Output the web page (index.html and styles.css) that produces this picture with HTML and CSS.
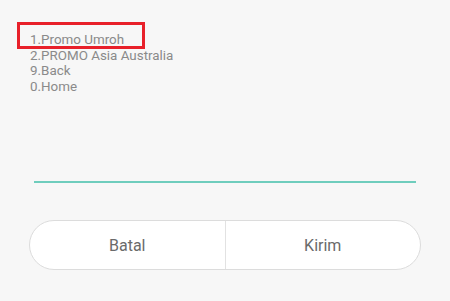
FILE: index.html
```html
<!DOCTYPE html>
<html>
<head>
<meta charset="utf-8">
<link rel="stylesheet" href="styles.css">
</head>
<body>
<div class="dialog">
  <div class="menu">
    <div class="item">1.Promo Umroh</div>
    <div class="item">2.PROMO Asia Australia</div>
    <div class="item">9.Back</div>
    <div class="item">0.Home</div>
    <div class="highlight"></div>
  </div>
  <div class="input-line"></div>
  <div class="buttons">
    <div class="btn">Batal</div>
    <div class="btn">Kirim</div>
  </div>
</div>
</body>
</html>
```
FILE: styles.css
```css
html, body {
  margin: 0;
  padding: 0;
  background: #f7f7f7;
  width: 450px;
  height: 301px;
  overflow: hidden;
  font-family: Roboto, "Noto Sans", sans-serif;
}
.dialog {
  display: flex;
  flex-direction: column;
}
.menu {
  position: relative;
  padding: 32px 0 0 30px;
  height: 148px;
  box-sizing: border-box;
}
.item {
  font-size: 13.4px;
  line-height: 15.5px;
  color: #8a8a8a;
}
.highlight {
  position: absolute;
  left: 17px;
  top: 22px;
  width: 128px;
  height: 27px;
  box-sizing: border-box;
  border: 3px solid #e8202a;
}
.input-line {
  margin: 33px 34px 0 34px;
  height: 2px;
  background: #6fcdbd;
}
.buttons {
  margin: 37px 29px 0 29px;
  height: 50px;
  box-sizing: border-box;
  border: 1px solid #dcdcdc;
  border-radius: 25px;
  background: #fff;
  display: flex;
  overflow: hidden;
}
.btn {
  flex: 1;
  display: flex;
  align-items: center;
  justify-content: center;
  font-size: 16px;
  color: #6a6a6a;
}
.btn + .btn {
  border-left: 1px solid #e2e2e2;
}
```
